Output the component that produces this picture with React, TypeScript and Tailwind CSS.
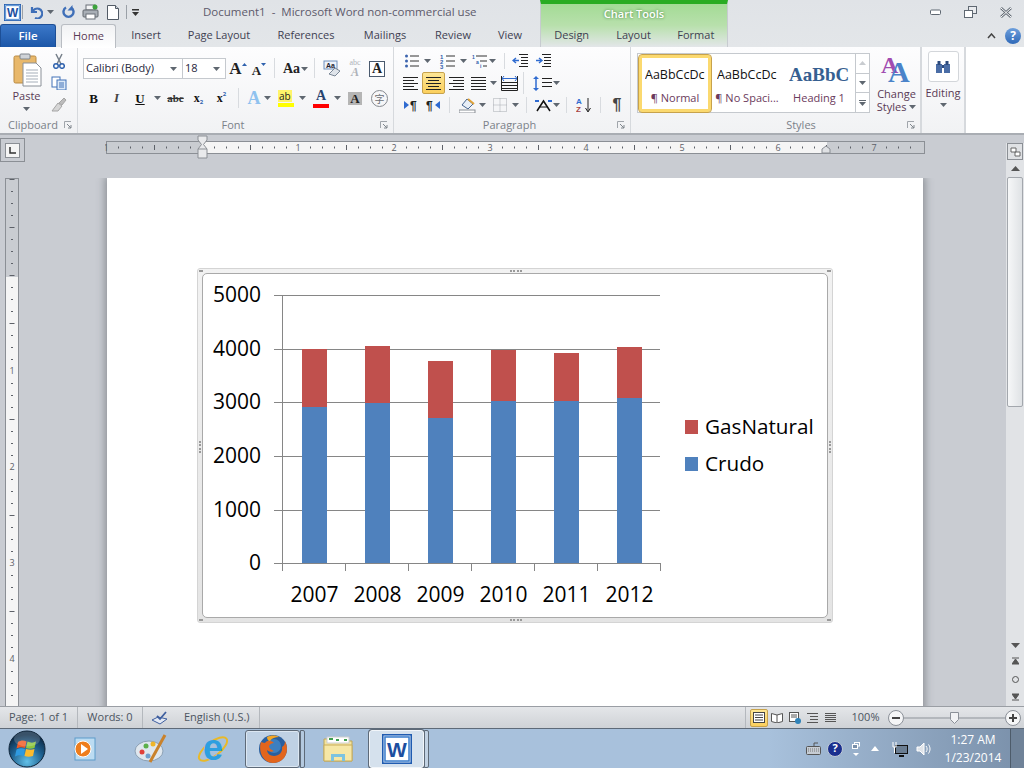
import React from "react";

const SANS = "font-['Open_Sans','Noto_Sans',sans-serif]";

function Arrow({ className = "" }: { className?: string }) {
  return <svg width="7" height="4" viewBox="0 0 7 4" className={className}><path d="M0 0h7L3.5 4z" fill="#5f6770" /></svg>;
}
function Cell({ className = "", children }: { className?: string; children?: React.ReactNode }) {
  return <div className={`flex items-center justify-center shrink-0 ${className}`}>{children}</div>;
}
function ArrowCell({ className = "w-[10px]" }: { className?: string }) {
  return <Cell className={className}><Arrow /></Cell>;
}
function Sep({ className = "" }: { className?: string }) {
  return <div className={`w-px self-stretch bg-[#d8dbdf] shrink-0 ${className}`} />;
}
function Launcher() {
  return <svg width="8" height="8" viewBox="0 0 8 8" className="shrink-0"><path d="M.5 7V.5H7" fill="none" stroke="#a0a5ab" /><path d="M3 3l4 4M7 4v3H4" fill="none" stroke="#7e858c" /></svg>;
}
function Lines({ rows = 5, w = 15, kind = "l" }: { rows?: number; w?: number; kind?: "l" | "c" | "r" | "j" }) {
  const ys = Array.from({ length: rows }, (_, i) => 1.5 + i * 3);
  return (
    <svg width={w} height={rows * 3} viewBox={`0 0 ${w} ${rows * 3}`}>
      {ys.map((y, i) => {
        const short = kind !== "j" && i % 2 === 1 ? 4 : 0;
        const x1 = kind === "l" ? 0 : kind === "c" ? short / 2 : short;
        const x2 = kind === "l" ? w - short : kind === "c" ? w - short / 2 : w;
        return <path key={i} d={`M${x1} ${y}H${x2}`} stroke="#222" strokeWidth="1" />;
      })}
    </svg>
  );
}
function ListIcon({ kind }: { kind: "b" | "n" | "m" }) {
  return (
    <svg width="16" height="15" viewBox="0 0 16 15" className="overflow-visible">
      {kind === "b" && [2, 7, 12].map((y) => <rect key={y} x="1" y={y - 1.5} width="3" height="3" rx="1.5" fill="#3c64ae" />)}
      {kind === "n" && ["1", "2", "3"].map((t, i) => <text key={t} x="0" y={5 + i * 5} fontSize="6" fontWeight="700" fill="#2f5cab" fontFamily="Liberation Sans">{t}</text>)}
      {kind === "m" && <>
        <text x="0" y="5" fontSize="5" fontWeight="700" fill="#2f5cab" fontFamily="Liberation Sans">1</text>
        <text x="4" y="9.500" fontSize="5" fontWeight="700" fill="#2f5cab" fontFamily="Liberation Sans">a</text>
        <text x="8" y="14" fontSize="5" fontWeight="700" fill="#2f5cab" fontFamily="Liberation Sans">i</text>
      </>}
      {kind !== "m" ? [2, 7, 12].map((y) => <path key={y} d={`M6 ${y}H15`} stroke="#333" />) : <path d="M4 2H15M8 7H15M11 12H15" stroke="#333" />}
    </svg>
  );
}
function Indent({ flip }: { flip?: boolean }) {
  return (
    <svg width="17" height="14" viewBox="0 0 17 14">
      <path d="M7 .5H16M9 3.500H16M9 6.500H16M9 9.500H16M7 12.500H16" stroke="#222" />
      <path d={flip ? "M1 6.500H6M4 4l3 2.500L4 9" : "M7 6.500H1M4 4L1 6.500 4 9"} stroke="#2f6bd0" strokeWidth="1.400" fill="none" />
    </svg>
  );
}
function WordLogo({ size = 20 }: { size?: number }) {
  return (
    <svg width={size} height={size} viewBox="0 0 20 20">
      <rect x=".5" y=".5" width="19" height="19" fill="#dbe9f8" stroke="#1f5bb0" />
      <rect x="2" y="2" width="16" height="16" fill="#fff" stroke="#3a7ccb" />
      <text x="10" y="15.500" textAnchor="middle" fontSize="14" fontWeight="700" fill="#1d4f9f" fontFamily="Liberation Sans">W</text>
    </svg>
  );
}
function TinyA({ className = "", children }: { className?: string; children?: React.ReactNode }) {
  return <span className={`font-['Liberation_Serif',serif] font-bold leading-none ${className}`}>{children}</span>;
}
function StyleBox({ sample, label, className = "", sampleClass = "" }: { sample: string; label: string; className?: string; sampleClass?: string }) {
  return (
    <div className={`flex flex-col items-center overflow-hidden shrink-0 ${className}`}>
      <div className={`h-[30px] w-[60px] overflow-hidden whitespace-nowrap flex items-center ${sampleClass}`}>{sample}</div>
      <div className="text-[11px] text-[#6b3a5c] whitespace-nowrap leading-[16px]">{label}</div>
    </div>
  );
}
function GroupLabel({ text, className = "" }: { text: string; className?: string }) {
  return (
    <div className={`h-[16px] flex items-center text-[11px] text-[#7b8189] ${className}`}>
      <span className="flex-1 text-center">{text}</span>
      <Launcher />
    </div>
  );
}

function Chart() {
  const grid = [295, 349, 402, 456, 510, 563];
  const labels = ["5000", "4000", "3000", "2000", "1000", "0"];
  const bars = [
    { x: 302, b: 407, r: 349, y: "2007" },
    { x: 365, b: 403, r: 346, y: "2008" },
    { x: 428, b: 418, r: 361, y: "2009" },
    { x: 491, b: 401, r: 350, y: "2010" },
    { x: 554, b: 401, r: 353, y: "2011" },
    { x: 617, b: 398, r: 347, y: "2012" },
  ];
  const font = "'Open Sans', sans-serif";
  return (
    <svg width="624" height="343" viewBox="203 274 624 343" className="block">
      {grid.map((y) => <path key={y} d={`M274 ${y + 0.5}H660`} stroke="#868686" />)}
      <path d="M282.500 295V571" stroke="#868686" />
      {[345, 408, 471, 534, 597, 660].map((x) => <path key={x} d={`M${x + 0.5} 563V571`} stroke="#868686" />)}
      {bars.map((b) => (
        <g key={b.y}>
          <rect x={b.x} y={b.r} width="25" height={b.b - b.r} fill="#c0504d" />
          <rect x={b.x} y={b.b} width="25" height={563 - b.b} fill="#4f81bd" />
          <text x={b.x + 12.5} y="602" textAnchor="middle" fontSize="21" fill="#000" fontFamily={font}>{b.y}</text>
        </g>
      ))}
      {labels.map((t, i) => <text key={t} x="261" y={grid[i] + 7} textAnchor="end" fontSize="21" fill="#000" fontFamily={font}>{t}</text>)}
      <rect x="685" y="420" width="13" height="14" fill="#c0504d" />
      <rect x="685" y="457" width="13" height="14" fill="#4f81bd" />
      <text x="705" y="434" fontSize="20.700" fill="#000" fontFamily={font}>GasNatural</text>
      <text x="705" y="471" fontSize="20.700" fill="#000" fontFamily={font}>Crudo</text>
    </svg>
  );
}

function HRuler() {
  const xs = Array.from({ length: 68 }, (_, i) => i);
  return (
    <svg width="820" height="24" viewBox="105 136 820 24" className="block">
      <rect x="106.500" y="142.500" width="818" height="12" fill="#c9ccd1" stroke="#8b8f95" />
      <rect x="202" y="143" width="625" height="11" fill="#f5f5f5" />
      {xs.map((i) => {
        const px = 106 + i * 12;
        if (px > 920) return null;
        const label = i === 0 ? "1" : i > 8 && (i - 8) % 8 === 0 ? String((i - 8) / 8) : "";
        if (label) return <text key={i} x={px} y="152" textAnchor="middle" fontSize="9" fill="#5d6168" fontFamily="'Open Sans',sans-serif">{label}</text>;
        return <path key={i} d={i % 4 === 0 ? `M${px + .5} 146V151` : `M${px + .5} 147.500V149.500`} stroke="#5d6168" />;
      })}
      <path d="M198 137h9v4l-3.500 4.500L207 150v9h-9v-9l3.500-4.500L198 141z" fill="#e9eaec" stroke="#8b8f95" />
      <path d="M198 150h9" stroke="#8b8f95" />
      <path d="M822 154v-4l4-3 4 3v4z" fill="#dfe1e4" stroke="#8b8f95" />
    </svg>
  );
}
function VRuler() {
  const ys = Array.from({ length: 44 }, (_, i) => 12 * i + 1);
  return (
    <svg width="14" height="530" viewBox="0 0 14 530" className="block">
      <rect x=".5" y=".5" width="13" height="540" fill="#f5f5f5" stroke="#8b8f95" />
      <rect x="1" y="1" width="12" height="98" fill="#c9ccd1" />
      {ys.map((y, i) => {
        const num = i >= 8 && (i - 8) % 8 === 0 ? (i - 8) / 8 : 0;
        if (num) return <text key={i} x="7" y={y + 3} textAnchor="middle" fontSize="9" fill="#5d6168" fontFamily="'Open Sans',sans-serif">{num}</text>;
        return <path key={i} d={i % 4 === 0 ? `M4.500 ${y + .5}H9.500` : `M6 ${y + .5}H8`} stroke="#5d6168" />;
      })}
    </svg>
  );
}

function Ribbon() {
  return (
    <div className="h-[88px] flex bg-gradient-to-b from-[#fdfdfe] to-[#f1f2f4] border-b-2 border-[#a9adb3] text-[#39404a]">
      {/* Clipboard */}
      <div className="w-[78px] shrink-0 border-r border-[#d6d9dd] flex flex-col">
        <div className="flex-1 flex">
          <div className="w-[53px] flex flex-col items-center pt-[6px]">
            <svg width="30" height="34" viewBox="0 0 30 34">
              <rect x="2" y="3" width="22" height="27" rx="1.500" fill="#e8b86b" stroke="#b98a43" />
              <rect x="8" y="1" width="10" height="5" rx="1" fill="#cfd3d8" stroke="#7e848b" />
              <path d="M11 10h13l5 5v18H11z" fill="#fff" stroke="#8a9098" />
              <path d="M14 17h12M14 20h12M14 23h12M14 26h12M14 29h12" stroke="#a5aeb9" />
            </svg>
            <div className="text-[11px] leading-[14px] mt-[2px] text-[#5a3a55]">Paste</div>
            <Arrow className="mt-[4px]" />
          </div>
          <div className="flex flex-col items-center pt-[6px] gap-[7px] w-[18px] -ml-[3px]">
            <svg width="12" height="16" viewBox="0 0 12 16"><path d="M3 1l5 10M9 1L4 11" stroke="#77808b" strokeWidth="1.500" /><circle cx="3" cy="13" r="2.300" fill="none" stroke="#2f62ae" strokeWidth="1.500" /><circle cx="9" cy="13" r="2.300" fill="none" stroke="#2f62ae" strokeWidth="1.500" /></svg>
            <svg width="16" height="14" viewBox="0 0 16 14"><rect x="1" y="1" width="8" height="10" fill="#fff" stroke="#4273b8" /><rect x="6" y="4" width="9" height="10" fill="#dce9f7" stroke="#4273b8" /><path d="M8 7h5M8 9h5M8 11h5" stroke="#4273b8" /></svg>
            <svg width="16" height="15" viewBox="0 0 16 15"><path d="M1 14L7 6l4 3-4 5z" fill="#d6d6d6" stroke="#a5a5a5" /><path d="M8 6l5-5 2 2-4 5z" fill="#bcbcbc" stroke="#a5a5a5" /></svg>
          </div>
        </div>
        <GroupLabel text="Clipboard" className="pl-[2px] pr-[5px]" />
      </div>
      {/* Font */}
      <div className="w-[316px] shrink-0 border-r border-[#d6d9dd] flex flex-col">
        <div className="flex-1 flex flex-col">
          <div className="flex items-center h-[21px] mt-[11px] ml-[5px]">
            <div className="w-[100px] h-[21px] bg-white border border-[#c5c9ce] flex items-center justify-between pl-[2px] pr-[5px] text-[11px] text-[#1f1f3c]">Calibri (Body)<Arrow /></div>
            <div className="w-[43px] h-[21px] bg-white border border-l-0 border-[#c5c9ce] flex items-center justify-between pl-[2px] pr-[5px] text-[11px] text-[#1f1f3c]">18<Arrow /></div>
            <Cell className="w-[20px] ml-[2px]"><TinyA className="text-[17px] text-[#222]">A</TinyA><svg width="5" height="3" viewBox="0 0 5 3" className="mb-[9px]"><path d="M0 3h5L2.500 0z" fill="#2f62ae" /></svg></Cell>
            <Cell className="w-[20px] ml-[1px]"><TinyA className="text-[13px] text-[#222] mt-[3px]">A</TinyA><svg width="5" height="3" viewBox="0 0 5 3" className="mb-[8px]"><path d="M0 0h5L2.500 3z" fill="#2f62ae" /></svg></Cell>
            <Sep className="ml-[5px] h-[20px]" />
            <Cell className="w-[17px] ml-[8px]"><TinyA className="text-[14px] text-[#222]">Aa</TinyA></Cell>
            <ArrowCell className="w-[8px]" />
            <Sep className="ml-[6px] h-[20px]" />
            <Cell className="w-[18px] ml-[8px]">
              <svg width="18" height="17" viewBox="0 0 18 17"><rect x="1" y="1" width="13" height="8" fill="#eef3fa" stroke="#6e8fbd" /><text x="3" y="8" fontSize="7" fontWeight="700" fill="#223" fontFamily="Liberation Sans">Aa</text><path d="M6 14l6-6 5 3-5 5z" fill="#dfe4ea" stroke="#7a8796" /></svg>
            </Cell>
            <Cell className="w-[16px] ml-[6px]">
              <div className="flex flex-col items-center leading-none text-[#aeb2b8] font-['Liberation_Serif',serif]"><span className="text-[8px]">abc</span><span className="text-[12px] italic font-bold -mt-[1px]">A</span></div>
            </Cell>
            <Cell className="w-[16px] h-[16px] ml-[6px] border border-[#4a5a6e] bg-white"><TinyA className="text-[14px] text-[#222]">A</TinyA></Cell>
          </div>
          <div className="flex items-center h-[20px] mt-[9px] ml-[4px]">
            <Cell className="w-[23px]"><TinyA className="text-[13px] text-[#111]">B</TinyA></Cell>
            <Cell className="w-[23px]"><span className="font-['Liberation_Serif',serif] italic text-[13px] font-bold text-[#444]">I</span></Cell>
            <Cell className="w-[24px]"><TinyA className="text-[13px] text-[#111] underline">U</TinyA></Cell>
            <ArrowCell />
            <Cell className="w-[23px] ml-[2px]"><span className="font-['Liberation_Serif',serif] font-bold text-[11px] text-[#333] line-through">abc</span></Cell>
            <Cell className="w-[23px]"><TinyA className="text-[12px] text-[#111]">x</TinyA><span className="text-[6px] text-[#2f62ae] font-bold mt-[8px]">2</span></Cell>
            <Cell className="w-[23px]"><TinyA className="text-[12px] text-[#111]">x</TinyA><span className="text-[6px] text-[#2f62ae] font-bold mb-[8px]">2</span></Cell>
            <Sep className="ml-[5px]" />
            <Cell className="w-[16px] ml-[7px]"><TinyA className="text-[18px] text-[#8fc2ef]">A</TinyA></Cell>
            <ArrowCell />
            <Cell className="w-[16px] ml-[6px]">
              <div className="flex flex-col w-[16px] items-center"><span className="text-[10px] leading-[12px] bg-[#fff46a] text-[#222] self-start px-[1px]">ab</span><div className="h-[4px] w-[16px] bg-[#ffff00] mt-[1px]" /></div>
            </Cell>
            <ArrowCell className="w-[10px] ml-[3px]" />
            <Cell className="w-[16px] ml-[6px]">
              <div className="flex flex-col w-[16px] items-center"><TinyA className="text-[14px] text-[#28436e]">A</TinyA><div className="h-[4px] w-[16px] bg-[#ff0000] mt-[1px]" /></div>
            </Cell>
            <ArrowCell className="w-[10px] ml-[3px]" />
            <Cell className="w-[14px] h-[13px] ml-[6px] bg-[#b5b5b5]"><TinyA className="text-[13px] text-[#222]">A</TinyA></Cell>
            <Cell className="w-[17px] h-[17px] ml-[9px] rounded-full border border-[#85898f] text-[10px] text-[#6b6f75] font-['Noto_Sans_CJK_SC',sans-serif]">字</Cell>
          </div>
        </div>
        <GroupLabel text="Font" className="pr-[5px] pl-[8px]" />
      </div>
      {/* Paragraph */}
      <div className="w-[237px] shrink-0 border-r border-[#d6d9dd] flex flex-col">
        <div className="flex-1 flex flex-col">
          <div className="flex items-center h-[16px] mt-[6px] ml-[10px]">
            <Cell className="w-[16px]"><ListIcon kind="b" /></Cell>
            <ArrowCell className="w-[10px] ml-[2px]" />
            <Cell className="w-[16px] ml-[8px]"><ListIcon kind="n" /></Cell>
            <ArrowCell className="w-[10px] ml-[2px]" />
            <Cell className="w-[16px] ml-[4px]"><ListIcon kind="m" /></Cell>
            <ArrowCell className="w-[8px]" />
            <Sep className="ml-[8px]" />
            <Cell className="w-[17px] ml-[7px]"><Indent /></Cell>
            <Cell className="w-[17px] ml-[6px]"><Indent flip /></Cell>
          </div>
          <div className="flex items-center h-[22px] mt-[3px] ml-[5px]">
            <Cell className="w-[23px]"><Lines kind="l" /></Cell>
            <Cell className="w-[23px] h-[22px] bg-gradient-to-b from-[#fde694] to-[#fbcf5c] border border-[#c7a24c] rounded-[2px]"><Lines kind="c" /></Cell>
            <Cell className="w-[21px] ml-[1px]"><Lines kind="r" /></Cell>
            <Cell className="w-[22px]"><Lines kind="j" /></Cell>
            <ArrowCell className="w-[8px]" />
            <Cell className="w-[18px] ml-[3px]">
              <svg width="17" height="16" viewBox="0 0 17 16"><path d="M1 3.500h15M3 6l-2-2.500L3 1M14 1l2 2.500L14 6" stroke="#2f6bd0" fill="none" /><path d="M1 7.500h15M1 10.500h15M1 13.500h15" stroke="#222" /><path d="M.5 1V15.500H16.500V1" stroke="#222" fill="none" /></svg>
            </Cell>
            <Sep className="ml-[5px]" />
            <Cell className="w-[20px] ml-[8px]">
              <svg width="19" height="17" viewBox="0 0 19 17"><path d="M3 2V15" stroke="#2f6bd0" strokeWidth="1.500" /><path d="M0 4l3-3 3 3M0 13l3 3 3-3" fill="#2f6bd0" /><path d="M9 3.500h10M9 7.500h10M9 11.500h10" stroke="#222" /></svg>
            </Cell>
            <ArrowCell className="w-[8px]" />
          </div>
          <div className="flex items-center h-[16px] mt-[3px] ml-[9px]">
            <Cell className="w-[16px]"><svg width="14" height="12" viewBox="0 0 14 12" className="overflow-visible"><path d="M0 2l5 4-5 4z" fill="#2f6bd0" /><text x="6" y="10.500" fontSize="12" fontWeight="700" fill="#222" fontFamily="Liberation Sans">¶</text></svg></Cell>
            <Cell className="w-[14px] ml-[7px]"><svg width="14" height="12" viewBox="0 0 14 12" className="overflow-visible"><text x="0" y="10.500" fontSize="12" fontWeight="700" fill="#222" fontFamily="Liberation Sans">¶</text><path d="M14 2L9 6l5 4z" fill="#2f6bd0" /></svg></Cell>
            <Sep className="ml-[9px]" />
            <Cell className="w-[17px] ml-[9px]"><svg width="17" height="16" viewBox="0 0 17 16"><path d="M3 8l5-6 6 5-5 5z" fill="#e7eef7" stroke="#45648f" /><path d="M9 2l6 5" stroke="#e0a33a" strokeWidth="2" /><rect x="0" y="13" width="16" height="3" fill="#fff" stroke="#8a8f96" /></svg></Cell>
            <ArrowCell className="w-[8px] ml-[2px]" />
            <Cell className="w-[14px] ml-[7px]"><svg width="14" height="14" viewBox="0 0 14 14"><path d="M.5.500h13v13H.500zM7 .5v13M.5 7h13" stroke="#a7abb1" strokeDasharray="1 1" fill="none" /></svg></Cell>
            <ArrowCell className="w-[8px] ml-[4px]" />
            <Sep className="ml-[7px]" />
            <Cell className="w-[17px] ml-[8px]"><svg width="17" height="14" viewBox="0 0 17 14"><path d="M2 13L8.500 3 15 13" fill="none" stroke="#111" strokeWidth="1.500" /><path d="M4 9h9" stroke="#111" /><path d="M0 3h4M13 3h4" stroke="#2f6bd0" strokeWidth="2" /></svg></Cell>
            <ArrowCell className="w-[8px]" />
            <Sep className="ml-[6px]" />
            <Cell className="w-[16px] ml-[9px]"><svg width="16" height="16" viewBox="0 0 16 16"><text x="0" y="7" fontSize="8" fontWeight="700" fill="#2f6bd0" fontFamily="Liberation Sans">A</text><text x="0" y="15" fontSize="8" fontWeight="700" fill="#a84343" fontFamily="Liberation Sans">Z</text><path d="M12 1v13M9.500 11l2.500 4 2.500-4" stroke="#222" fill="none" /></svg></Cell>
            <Sep className="ml-[8px]" />
            <Cell className="w-[10px] ml-[11px] text-[16px] font-bold text-[#444] font-['Liberation_Sans',sans-serif]">¶</Cell>
          </div>
        </div>
        <GroupLabel text="Paragraph" className="pr-[5px] pl-[8px]" />
      </div>
      {/* Styles */}
      <div className="w-[291px] shrink-0 border-r-2 border-[#d6d9dd] flex flex-col">
        <div className="flex-1 flex">
          <div className="ml-[6px] mt-[6px] w-[233px] h-[60px] bg-white border border-[#c5c9ce] flex items-center">
            <StyleBox sample="AaBbCcDc" label="¶ Normal" className="w-[72px] h-[57px] border-[3px] border-[#fbd96f] rounded-[3px] outline outline-[#c7a24c] text-[#333] justify-center ml-px" sampleClass="text-[12.500px] text-[#111]" />
            <StyleBox sample="AaBbCcDc" label="¶ No Spaci..." className="w-[72px] justify-center" sampleClass="text-[12.500px] text-[#111]" />
            <StyleBox sample="AaBbCc" label="Heading 1" className="w-[72px] justify-center" sampleClass="text-[19px] font-bold text-[#365f91] font-['Liberation_Serif',serif]" />
            <div className="w-[14px] h-full border-l border-[#c5c9ce] flex flex-col shrink-0 ml-auto">
              <Cell className="flex-1 border-b border-[#c5c9ce]"><svg width="7" height="4" viewBox="0 0 7 4"><path d="M0 4h7L3.500 0z" fill="#c9ccd0" /></svg></Cell>
              <Cell className="flex-1 border-b border-[#c5c9ce]"><Arrow /></Cell>
              <Cell className="flex-1 flex-col gap-[1px]"><div className="w-[7px] h-px bg-[#5f6770]" /><Arrow /></Cell>
            </div>
          </div>
          <div className="flex-1 flex flex-col items-center pt-[6px] pl-[3px]">
            <svg width="34" height="32" viewBox="0 0 34 32" className="overflow-visible">
              <text x="1" y="20" fontSize="24" fontWeight="700" fill="#a14cb0" fontFamily="Liberation Serif">A</text>
              <text x="8" y="29" fontSize="30" fontWeight="700" fill="#4a83c9" fontFamily="Liberation Serif">A</text>
            </svg>
            <div className="text-[11px] leading-[13px] mt-[2px] text-center text-[#5a3a55]">Change<br />Styles <Arrow className="inline mb-[2px]" /></div>
          </div>
        </div>
        <GroupLabel text="Styles" className="pr-[5px] pl-[64px]" />
      </div>
      {/* Editing */}
      <div className="w-[44px] shrink-0 border-r-2 border-[#d6d9dd] flex flex-col items-center pt-[4px]">
        <Cell className="w-[31px] h-[31px] bg-white border border-[#d3d6da] rounded-[3px]">
          <svg width="16" height="14" viewBox="0 0 16 14"><rect x="1" y="4" width="6" height="9" fill="#4a6da6" /><rect x="9" y="4" width="6" height="9" fill="#4a6da6" /><rect x="2.500" y="1" width="3" height="4" fill="#2c4a7d" /><rect x="10.500" y="1" width="3" height="4" fill="#2c4a7d" /><rect x="7" y="5" width="2" height="3" fill="#2c4a7d" /></svg>
        </Cell>
        <div className="text-[11px] leading-[13px] mt-[4px] text-[#5a3a55]">Editing</div>
        <Arrow className="mt-[4px]" />
      </div>
      <div className="flex-1 bg-white" />
    </div>
  );
}

function TopBar() {
  return (
    <div className="h-[47px] flex bg-gradient-to-b from-[#e0e3e7] to-[#e3e6e9] relative">
      <div className="w-[540px] shrink-0 flex flex-col">
        <div className="h-[24px] flex items-center">
          <Cell className="w-[22px] ml-[1px]"><WordLogo size={17} /></Cell>
          <div className="w-px h-[14px] bg-[#9aa0a7] ml-[-1px]" />
          <Cell className="w-[14px] ml-[6px]"><svg width="13" height="13" viewBox="0 0 13 13"><path d="M2 1v5h5M2.500 6A5 5 0 1 1 5 12" fill="none" stroke="#3f6fb8" strokeWidth="2.200" /></svg></Cell>
          <ArrowCell className="w-[10px] ml-[2px]" />
          <Cell className="w-[14px] ml-[6px]"><svg width="13" height="14" viewBox="0 0 13 14"><path d="M4 2.500A5 5 0 1 0 9 2.500" fill="none" stroke="#3f6fb8" strokeWidth="2.400" /><path d="M10.500 0v5.500H5.500z" fill="#3f6fb8" /></svg></Cell>
          <Cell className="w-[17px] ml-[7px]"><svg width="17" height="16" viewBox="0 0 17 16"><rect x="4" y="1" width="9" height="5" fill="#f4f5f6" stroke="#6b7178" /><rect x="1" y="6" width="15" height="7" rx="1" fill="#a9afb6" stroke="#63696f" /><rect x="4" y="10" width="9" height="5" fill="#fff" stroke="#6b7178" /><circle cx="13" cy="3" r="2.500" fill="#3da33d" /></svg></Cell>
          <Cell className="w-[13px] ml-[7px]"><svg width="12" height="15" viewBox="0 0 12 15"><path d="M.5.500h8l3 3v11H.500z" fill="#fff" stroke="#525b66" /><path d="M8.500.5v3h3" fill="#cfd6de" stroke="#525b66" /></svg></Cell>
          <div className="w-px h-[14px] bg-[#9aa0a7] ml-[7px]" />
          <Cell className="w-[10px] ml-[3px]"><svg width="7" height="7" viewBox="0 0 7 7"><path d="M0 0h7v1.500H0zM0 3h7L3.500 7z" fill="#333" /></svg></Cell>
          <div className="ml-[63px] text-[11.500px] text-[#5d5a6b] whitespace-pre">Document1  -  Microsoft Word non-commercial use</div>
        </div>
        <div className="h-[23px] flex items-end text-[11px] text-[#3f3f52]">
          <div className="w-[56px] h-[23px] rounded-t-[3px] bg-gradient-to-b from-[#3b78c9] to-[#1c57a8] text-white font-semibold text-[11.500px] flex items-center justify-center border border-[#1d4f96] border-b-0">File</div>
          <div className="w-[55px] h-[24px] ml-[5px] bg-gradient-to-b from-[#f1f2f4] to-white border border-b-0 border-[#b9bdc3] rounded-t-[3px] flex items-center justify-center text-[#5a3a55] -mb-px relative">Home</div>
          <div className="w-[60px] h-[23px] flex items-center justify-center">Insert</div>
          <div className="w-[86px] h-[23px] flex items-center justify-center">Page Layout</div>
          <div className="w-[88px] h-[23px] flex items-center justify-center">References</div>
          <div className="w-[70px] h-[23px] flex items-center justify-center">Mailings</div>
          <div className="w-[66px] h-[23px] flex items-center justify-center">Review</div>
          <div className="w-[48px] h-[23px] flex items-center justify-center">View</div>
        </div>
      </div>
      <div className="w-[188px] shrink-0 flex flex-col border-t-[4px] border-t-[#29ac22] bg-gradient-to-b from-[#a3db95] via-[#b8e0ac] to-[#e3e6e9] border-x border-[#c7cbd0]">
        <div className="h-[20px] flex items-center justify-center text-[11px] font-semibold text-white [text-shadow:0_0_3px_#3b7d34]">Chart Tools</div>
        <div className="h-[23px] flex items-center text-[11px] text-[#3f3f52]">
          <div className="w-[62px] text-center">Design</div>
          <div className="w-[63px] text-center">Layout</div>
          <div className="w-[63px] text-center">Format</div>
        </div>
      </div>
      <div className="flex-1 flex flex-col items-end">
        <div className="h-[24px] flex items-center">
          <svg width="12" height="7" viewBox="0 0 12 7"><rect x=".5" y="1" width="10" height="4.500" rx="1" fill="#fff" stroke="#5f6872" /></svg>
          <svg width="13" height="12" viewBox="0 0 13 12" className="ml-[22px]"><rect x="4.500" y=".5" width="8" height="7" fill="#e9ebee" stroke="#5f6872" /><rect x=".5" y="4.500" width="8" height="7" fill="#fff" stroke="#5f6872" /></svg>
          <svg width="12" height="11" viewBox="0 0 12 11" className="ml-[23px] mr-[12px]"><path d="M1 1l10 9M11 1L1 10" stroke="#5f6872" strokeWidth="2.500" /><path d="M1 1l10 9M11 1L1 10" stroke="#fff" strokeWidth="1" /></svg>
        </div>
        <div className="h-[23px] flex items-center">
          <svg width="9" height="6" viewBox="0 0 9 6" className="mr-[9px]"><path d="M1 5l3.500-4L8 5" fill="none" stroke="#444" strokeWidth="1.500" /></svg>
          <div className="w-[16px] h-[16px] rounded-full bg-gradient-to-b from-[#6d9fdc] to-[#2f69b8] text-white text-[12px] font-bold flex items-center justify-center mr-[3px]">?</div>
        </div>
      </div>
    </div>
  );
}

function Scrollbar() {
  return (
    <div className="w-[18px] shrink-0 flex flex-col items-center bg-[#e1e3e6]">
      <div className="h-[8px] w-full bg-[#c9ccd2] shrink-0" />
      <div className="w-[16px] h-[17px] border border-[#8b8f95] bg-[#dfe1e4] flex items-center justify-center shrink-0"><svg width="11" height="10" viewBox="0 0 11 10"><path d="M1 1h5v4H1zM5 5h5v4H5z" fill="#fff" stroke="#666" /></svg></div>
      <div className="h-[16px] flex items-center justify-center shrink-0"><svg width="9" height="5" viewBox="0 0 9 5"><path d="M0 5h9L4.500 0z" fill="#555" /></svg></div>
      <div className="w-[16px] h-[230px] border border-[#a3a7ad] rounded-[2px] bg-gradient-to-r from-[#f6f7f8] to-[#dfe2e5] mt-[1px] shrink-0" />
      <div className="flex-1" />
      <div className="h-[14px] flex items-center justify-center"><svg width="9" height="5" viewBox="0 0 9 5"><path d="M0 0h9L4.500 5z" fill="#555" /></svg></div>
      <div className="h-[18px] flex items-center justify-center"><svg width="7" height="8" viewBox="0 0 7 8"><path d="M0 1h7M3.500 2L0 7h7z" fill="#555" stroke="#555" /></svg></div>
      <div className="h-[18px] flex items-center justify-center"><div className="w-[7px] h-[7px] rounded-full border border-[#555]" /></div>
      <div className="h-[18px] flex items-center justify-center"><svg width="7" height="8" viewBox="0 0 7 8"><path d="M0 7h7M3.500 6L0 1h7z" fill="#555" stroke="#555" /></svg></div>
    </div>
  );
}

function StatusBar() {
  return (
    <div className="h-[22px] flex items-center bg-gradient-to-b from-[#e4e6e9] to-[#cfd2d6] border-t border-[#9a9ea4] text-[11px] text-[#4c5561]">
      <div className="w-[78px] h-full flex items-center justify-center border-r border-[#b4b8bd] shrink-0">Page: 1 of 1</div>
      <div className="w-[65px] h-full flex items-center justify-center border-r border-[#b4b8bd] shrink-0">Words: 0</div>
      <Cell className="w-[33px]"><svg width="17" height="14" viewBox="0 0 17 14"><path d="M1 9l6-3 9 2-7 5z" fill="#e3e9f4" stroke="#3f5f9f" /><path d="M6 5l3 3 6-7" fill="none" stroke="#3f5f9f" strokeWidth="1.800" /></svg></Cell>
      <div className="w-[84px] h-full flex items-center pl-[8px] border-r border-[#b4b8bd] shrink-0">English (U.S.)</div>
      <div className="flex-1" />
      <div className="w-px h-full bg-[#b4b8bd]" />
      <Cell className="w-[18px] h-[18px] ml-[4px] bg-gradient-to-b from-[#fde694] to-[#fbcf5c] border border-[#c7a24c] rounded-[2px]"><svg width="12" height="11" viewBox="0 0 12 11"><rect x=".5" y=".5" width="11" height="10" fill="#fff" stroke="#444" /><path d="M2 3h8M2 5.500h8M2 8h8" stroke="#444" /></svg></Cell>
      <Cell className="w-[18px]"><svg width="12" height="11" viewBox="0 0 12 11"><path d="M.5 1.500L6 3l5.500-1.500v8L6 11 .5 9.500zM6 3v8" fill="#fff" stroke="#555" /></svg></Cell>
      <Cell className="w-[18px]"><svg width="12" height="12" viewBox="0 0 12 12"><rect x=".5" y=".5" width="9" height="9" fill="#fff" stroke="#555" /><path d="M2 3h6M2 5h6" stroke="#555" /><circle cx="9" cy="9" r="3" fill="#2f82b8" /></svg></Cell>
      <Cell className="w-[18px]"><svg width="12" height="10" viewBox="0 0 12 10"><path d="M0 .5h11M3 3.500h8M3 6.500h8M0 9.500h11" stroke="#555" /></svg></Cell>
      <Cell className="w-[18px]"><svg width="12" height="10" viewBox="0 0 12 10"><path d="M0 .5h11M0 2.500h11M0 4.500h11M0 6.500h11M0 8.500h11" stroke="#555" /></svg></Cell>
      <div className="w-[45px] text-center ml-[3px]">100%</div>
      <Cell className="w-[16px] h-[16px] rounded-full border border-[#8b9098] bg-[#f5f6f7] text-[#444]"><div className="w-[8px] h-[2px] bg-[#444]" /></Cell>
      <div className="w-[101px] h-[2px] bg-[#b3b7bc] relative">
        <svg width="9" height="12" viewBox="0 0 9 12" className="absolute left-[46px] -top-[5px]"><path d="M.5.500h8v7L4.500 11.500.5 7.500z" fill="#f1f2f4" stroke="#8b9098" /></svg>
      </div>
      <Cell className="w-[16px] h-[16px] rounded-full border border-[#8b9098] bg-[#f5f6f7] relative mr-[3px]"><div className="w-[8px] h-[2px] bg-[#444]" /><div className="w-[2px] h-[8px] bg-[#444] absolute" /></Cell>
    </div>
  );
}

function Taskbar() {
  return (
    <div className="h-[40px] flex items-center bg-gradient-to-r from-[#a8c1dc] via-[#a8c1dc] via-75% to-[#7a90aa] border-t border-[#5e6a78] text-white">
      <Cell className="w-[54px]">
        <svg width="38" height="38" viewBox="0 0 38 38">
          <defs>
            <radialGradient id="orb" cx="50%" cy="85%" r="75%"><stop offset="0" stopColor="#62c0e8" /><stop offset=".6" stopColor="#1d5f8e" /><stop offset="1" stopColor="#0e2c48" /></radialGradient>
          </defs>
          <circle cx="19" cy="19" r="18" fill="url(#orb)" stroke="#0f2438" />
          <path d="M10 12c3-2 6-2 8.500-.5L17 18c-3-1-5-1-8.500.5z" fill="#ef5a24" />
          <path d="M19.500 11.500c3 1.500 6 1.500 8.500 0L26.500 18c-3 1-6 1-8.500 0z" fill="#8dc63f" />
          <path d="M8.500 19.500c3-1.500 5.500-1.500 8.500-.5L15.500 26c-3-1-5-1-8.500.5z" fill="#2f9ae0" />
          <path d="M18 19c3 1 6 1 8.500 0L25 26c-3 1-6 1-8.500 0z" fill="#fdbb2d" />
          <ellipse cx="19" cy="9" rx="13" ry="7.500" fill="#fff" opacity=".18" />
        </svg>
      </Cell>
      <Cell className="w-[54px] ml-[4px]">
        <svg width="30" height="30" viewBox="0 0 30 30"><rect x="5" y="4" width="20" height="22" fill="#bcdcf2" stroke="#5c9cc9" /><circle cx="13" cy="15" r="8" fill="#ee7d1c" stroke="#fff" /><path d="M11 10l7 5-7 5z" fill="#fff" /></svg>
      </Cell>
      <Cell className="w-[60px] ml-[9px]">
        <svg width="34" height="34" viewBox="0 0 34 34"><ellipse cx="15" cy="19" rx="14" ry="10" fill="#dfe7ee" stroke="#8ca0b4" /><circle cx="8" cy="20" r="2.500" fill="#e0403a" /><circle cx="12" cy="14" r="2.500" fill="#5cb04a" /><circle cx="19" cy="12" r="2.500" fill="#eeb52a" /><circle cx="14" cy="24" r="2.500" fill="#6ea0d0" /><path d="M31 3L16 30" stroke="#c9822c" strokeWidth="3" /></svg>
      </Cell>
      <Cell className="w-[64px]">
        <svg width="34" height="34" viewBox="0 0 34 34" className="overflow-visible"><ellipse cx="17" cy="17" rx="17" ry="7" fill="none" stroke="#e8b92a" strokeWidth="2" transform="rotate(-38 17 17)" /><text x="17" y="28" textAnchor="middle" fontSize="36" fontWeight="700" fill="#2d9fe0" fontFamily="Liberation Sans">e</text></svg>
      </Cell>
      <div className="w-[55px] h-[38px] border border-[#5e6a78] rounded-[3px] bg-[#bfd1e4] flex items-center justify-center shadow-[inset_0_0_0_1px_#dce7f2] shrink-0">
        <svg width="32" height="32" viewBox="0 0 32 32"><circle cx="16" cy="16" r="14" fill="#2a5f9e" /><circle cx="17" cy="13" r="7" fill="#3c7fc0" /><path d="M4 9C1 18 6 30 16 30c8 0 14-6 14-14 0-3-1-6-2-8 0 3-1 5-3 6 1 5-3 9-8 9-4 0-7-3-7-6 2 2 5 2 7 1-3-1-5-3-5-5 1-2 3-3 5-3-3-3-7-3-9 0-2 0-3-1-4-1z" fill="#e2651d" /><path d="M10 4c4-2 9-2 12 0-4 0-7 1-9 4-2 0-3-2-3-4z" fill="#f5a623" /></svg>
      </div>
      <div className="w-[5px] h-[38px] border border-[#5e6a78] rounded-r-[2px] bg-[#b4c9df] shrink-0" />
      <Cell className="w-[63px] ml-[1px]">
        <svg width="32" height="32" viewBox="0 0 32 32"><path d="M2 6h10l2 2h16v20H2z" fill="#f3e39e" stroke="#bda658" /><path d="M5 4h22v6H5z" fill="#fff" stroke="#cfcfcf" /><path d="M7 6h4M14 7h3M22 7h3" stroke="#3f9e4e" strokeWidth="2" /><path d="M2 12h28v16H2z" fill="#f6e7a6" stroke="#c8ad5c" /><path d="M9 28v-7h14v7h-3v-4h-8v4z" fill="#7cc3e0" /></svg>
      </Cell>
      <div className="w-[55px] h-[38px] border border-[#f2f6fa] rounded-[3px] bg-[#d5e1ed] flex items-center justify-center shadow-[0_0_0_1px_#5e6a78] shrink-0">
        <WordLogo size={30} />
      </div>
      <div className="w-[5px] h-[38px] border border-[#5e6a78] rounded-r-[2px] bg-[#c2d2e3] shrink-0" />
      <div className="flex-1" />
      <Cell className="w-[16px] mr-[6px]"><svg width="15" height="13" viewBox="0 0 15 13"><rect x=".5" y="4.500" width="14" height="8" rx="1" fill="#c6ccd3" stroke="#555" /><path d="M2 7h11M2 9h11" stroke="#777" strokeDasharray="1 1" /><path d="M8 4V1h4" stroke="#555" fill="none" /></svg></Cell>
      <Cell className="w-[16px] h-[16px] rounded-full bg-[#1a2f8f] border border-[#c3ccd6] text-[11px] font-bold">?</Cell>
      <div className="w-[12px] ml-[7px] flex flex-col items-center gap-[4px]"><svg width="8" height="7" viewBox="0 0 8 7"><rect x="2.500" y=".5" width="5" height="3.500" fill="none" stroke="#fff" /><rect x=".5" y="2.500" width="5" height="4" fill="#7a90aa" stroke="#fff" /></svg><svg width="6" height="3" viewBox="0 0 6 3"><path d="M0 0h6L3 3z" fill="#fff" /></svg></div>
      <Cell className="w-[10px] ml-[8px]"><svg width="8" height="5" viewBox="0 0 8 5"><path d="M0 5h8L4 0z" fill="#fff" /></svg></Cell>
      <Cell className="w-[17px] ml-[11px]"><svg width="16" height="16" viewBox="0 0 16 16"><rect x="3.500" y="4.500" width="12" height="8" fill="#6a7d92" stroke="#111" /><path d="M1 1v5h3V1M2.500 6v6" stroke="#fff" fill="none" /><path d="M7 15h5" stroke="#111" strokeWidth="2" /></svg></Cell>
      <Cell className="w-[16px] ml-[7px]"><svg width="15" height="14" viewBox="0 0 15 14"><path d="M1 5h3l4-4v12L4 9H1z" fill="#dfe3e8" stroke="#fff" /><path d="M10 4c1.500 2 1.500 4 0 6M12.500 2.500c2 3 2 6 0 9" stroke="#fff" fill="none" /></svg></Cell>
      <div className="w-[72px] ml-[6px] flex flex-col items-center text-[12px] leading-[18px]">
        <div>1:27 AM</div>
        <div>1/23/2014</div>
      </div>
      <div className="w-[14px] h-full bg-[#6f8298] border-l border-[#4d5b6a] ml-[1px] shrink-0" />
    </div>
  );
}

function Handle({ className = "" }: { className?: string }) {
  return <div className={`absolute border-dotted border-[#9a9a9a] ${className}`} />;
}

export default function App() {
  return (
    <div className={`w-[1024px] h-[768px] overflow-hidden flex flex-col bg-[#c9ccd2] ${SANS}`}>
      <TopBar />
      <Ribbon />
      <div className="flex-1 min-h-0 flex">
        <div className="w-[1006px] shrink-0 flex flex-col">
          <div className="h-[43px] flex items-start shrink-0">
            <Cell className="w-[25px] h-[24px] mt-[3px] border border-[#8b8f95] shrink-0">
              <div className="w-[15px] h-[15px] bg-[#f5f5f5] border border-[#8b8f95] flex items-center justify-center"><svg width="7" height="7" viewBox="0 0 7 7"><path d="M1 0v6h6" fill="none" stroke="#333" strokeWidth="1.500" /></svg></div>
            </Cell>
            <div className="ml-[80px]"><HRuler /></div>
          </div>
          <div className="flex-1 min-h-0 flex overflow-hidden">
            <div className="w-[14px] ml-[5px] shrink-0"><VRuler /></div>
            <div className="w-[816px] ml-[88px] bg-white shadow-[0_0_8px_2px_#8a8e94] flex justify-center shrink-0 pt-[90px] h-[600px]">
              <div className="w-[636px] h-[355px] shrink-0 border border-[#d4d4d4] rounded-[3px] bg-gradient-to-b from-[#f2f2f2] to-[#e4e4e4] p-[4px] relative">
                <div className="w-full h-full bg-white border border-[#a9a9a9] rounded-[5px] overflow-hidden"><Chart /></div>
                <Handle className="left-[312px] top-[1px] w-[12px] border-t-2" />
                <Handle className="left-[312px] bottom-[1px] w-[12px] border-b-2" />
                <Handle className="left-[1px] top-[172px] h-[12px] border-l-2" />
                <Handle className="right-[1px] top-[172px] h-[12px] border-r-2" />
                <Handle className="left-[1px] top-[1px] w-[4px] border-t-2" />
                <Handle className="right-[1px] top-[1px] w-[4px] border-t-2" />
                <Handle className="left-[1px] bottom-[1px] w-[4px] border-b-2" />
                <Handle className="right-[1px] bottom-[1px] w-[4px] border-b-2" />
              </div>
            </div>
          </div>
        </div>
        <Scrollbar />
      </div>
      <StatusBar />
      <Taskbar />
    </div>
  );
}
